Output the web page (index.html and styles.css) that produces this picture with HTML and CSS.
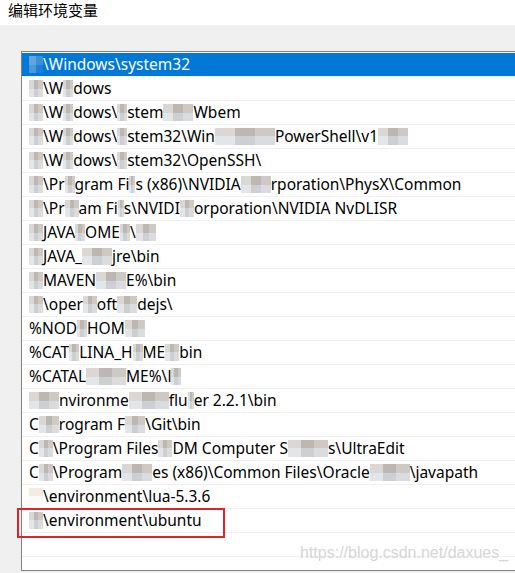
FILE: index.html
```html
<!DOCTYPE html>
<html lang="zh-CN">
<head>
    <meta charset="UTF-8">
    <title>编辑环境变量</title>
    <link rel="stylesheet" href="styles.css">
</head>
<body>
    <div class="titlebar">编辑环境变量</div>
    <div class="panel">
        <div class="listbox">
            <ul class="paths">
                <li class="row selected"><span class="mz w14 blue"></span>\Windows\system32</li>
                <li class="row"><span class="mz w14"></span>\W<span class="mz w10"></span>dows</li>
                <li class="row"><span class="mz w14"></span>\W<span class="mz w10"></span>dows\<span class="mz w10"></span>stem<span class="mz w30"></span>Wbem</li>
                <li class="row"><span class="mz w14"></span>\W<span class="mz w10"></span>dows\<span class="mz w10"></span>stem32\Win<span class="mz w60"></span>PowerShell\v1<span class="mz w30"></span></li>
                <li class="row"><span class="mz w14"></span>\W<span class="mz w10"></span>dows\<span class="mz w10"></span>stem32\OpenSSH\</li>
                <li class="row"><span class="mz w14"></span>\Pr<span class="mz w10"></span>gram Fi<span class="mz w6"></span>s (x86)\NVIDIA<span class="mz w30"></span>rporation\PhysX\Common</li>
                <li class="row"><span class="mz w14"></span>\Pr<span class="mz w14"></span>am Fi<span class="mz w6"></span>s\NVIDI<span class="mz w14"></span>orporation\NVIDIA NvDLISR</li>
                <li class="row"><span class="mz w14"></span>JAVA<span class="mz w10"></span>OME<span class="mz w10"></span>\<span class="mz w20"></span></li>
                <li class="row"><span class="mz w14"></span>JAVA_<span class="mz w30"></span>jre\bin</li>
                <li class="row"><span class="mz w14"></span>MAVEN<span class="mz w30"></span>E%\bin</li>
                <li class="row"><span class="mz w14"></span>\oper<span class="mz w14"></span>oft<span class="mz w20"></span>dejs\</li>
                <li class="row">%NOD<span class="mz w10"></span>HOM<span class="mz w20"></span></li>
                <li class="row">%CAT<span class="mz w10"></span>LINA_H<span class="mz w10"></span>ME<span class="mz w14"></span>bin</li>
                <li class="row">%CATAL<span class="mz w40"></span>ME%\l<span class="mz w10"></span></li>
                <li class="row"><span class="mz w30"></span>nvironme<span class="mz w40"></span>flu<span class="mz w6"></span>er 2.2.1\bin</li>
                <li class="row">C<span class="mz w20"></span>rogram F<span class="mz w20"></span>\Git\bin</li>
                <li class="row">C<span class="mz w14"></span>\Program Files<span class="mz w14"></span>DM Computer S<span class="mz w40"></span>s\UltraEdit</li>
                <li class="row">C<span class="mz w14"></span>\Program<span class="mz w30"></span>es (x86)\Common Files\Oracle<span class="mz w40"></span>\javapath</li>
                <li class="row"><span class="mz w14 light"></span>\environment\lua-5.3.6</li>
                <li class="row"><span class="mz w14"></span>\environment\ubuntu</li>
                <li class="row"></li>
                <li class="row"></li>
            </ul>
        </div>
        <div class="highlight"></div>
        <div class="watermark">https://blog.csdn.net/daxues_</div>
    </div>
</body>
</html>
```

FILE: styles.css
```css
html, body {
    margin: 0;
    padding: 0;
    overflow: hidden;
}
body {
    font-family: "Noto Sans", "Noto Sans CJK SC", sans-serif;
    background: #f0f0f0;
    color: #000;
}
.titlebar {
    height: 25px;
    background: #fff;
    padding-left: 8px;
    font-size: 15px;
    line-height: 20px;
    font-family: "Noto Sans CJK SC", sans-serif;
}
.panel {
    position: relative;
    height: 548px;
    padding: 26px 0 0 21px;
    box-sizing: border-box;
}
.listbox {
    width: 520px;
    height: 520px;
    box-sizing: border-box;
    border: 1px solid #828282;
    background: #fff;
    padding: 1px 0 0 0;
    overflow: hidden;
}
.paths {
    list-style: none;
    margin: 0;
    padding: 0;
}
.row {
    height: 23px;
    line-height: 23px;
    border-bottom: 1px solid #f0f0f0;
    padding-left: 7px;
    font-size: 15.5px;
    white-space: nowrap;
}
.row.selected {
    background: #0078d7;
    color: #fff;
}
.mz {
    display: inline-block;
    height: 17px;
    vertical-align: -3px;
    background:
        linear-gradient(90deg, rgba(255,255,255,0.45) 0 33%, transparent 33% 66%, rgba(255,255,255,0.25) 66%),
        linear-gradient(180deg, #bdb7b2 0 50%, #cdd0d3 50%);
}
.mz.blue {
    background:
        linear-gradient(90deg, rgba(255,255,255,0.2) 0 50%, transparent 50%),
        linear-gradient(180deg, #3d8fd8 0 50%, #1b7ed6 50%);
}
.mz.light {
    background: linear-gradient(180deg, #f3ece4 0 50%, #fafafa 50%);
}
.w6 { width: 6px; }
.w10 { width: 10px; }
.w14 { width: 14px; }
.w20 { width: 20px; }
.w30 { width: 30px; }
.w40 { width: 40px; }
.w60 { width: 60px; }
.highlight {
    position: absolute;
    left: 17px;
    top: 483px;
    width: 208px;
    height: 30px;
    box-sizing: border-box;
    border: 2px solid #e5202a;
}
.watermark {
    position: absolute;
    left: 300px;
    top: 519px;
    font-family: "Liberation Sans", sans-serif;
    font-size: 16px;
    color: #d6d6d6;
}
```
